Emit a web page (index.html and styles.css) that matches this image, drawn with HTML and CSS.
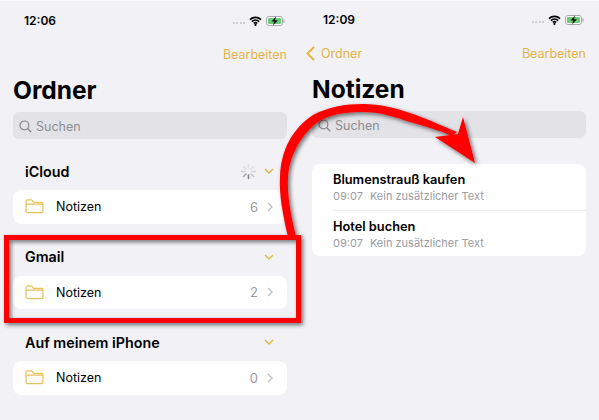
FILE: index.html
```html
<!DOCTYPE html>
<html>
    <head>
        <title>Notizen Ordner</title>
        <meta charset="UTF-8">
        <link rel="stylesheet" href="styles.css">
    </head>
    <body>
        <div class="shots">
            <div class="screen">
                <div class="status">
                    <span class="time">12:06</span>
                    <span class="status-icons">
                        <span class="dots"><i></i><i></i><i></i><i></i></span>
                        <svg class="wifi" width="13" height="10" viewBox="0 0 13 10"><path d="M1 3.600a8 8 0 0 1 11 0M2.900 5.600a5.200 5.200 0 0 1 7.200 0M4.800 7.400a2.500 2.500 0 0 1 3.400 0" fill="none" stroke="#000" stroke-width="1.700"/><circle cx="6.500" cy="8.900" r="1.100" fill="#000"/></svg>
                        <svg class="battery" width="19" height="10" viewBox="0 0 19 10"><rect x="0.500" y="0.500" width="16" height="9" rx="2.500" fill="#fff" stroke="#a9a9ad"/><rect x="2" y="2" width="13" height="6" rx="1" fill="#6ccb78"/><rect x="17.400" y="3.400" width="1.200" height="3.200" fill="#a9a9ad"/><path d="M10 0.500 5.500 5.600h2.800L7 9.500 12 4.300H9z" fill="#111"/></svg>
                    </span>
                </div>
                <div class="nav">
                    <span class="nav-link">Bearbeiten</span>
                </div>
                <h1>Ordner</h1>
                <div class="search">
                    <svg width="13" height="13" viewBox="0 0 13 13"><circle cx="5.400" cy="5.400" r="4.400" fill="none" stroke="#8b8b90" stroke-width="1.200"/><path d="M8.600 8.600 12.200 12.200" stroke="#8b8b90" stroke-width="1.400"/></svg>
                    <span>Suchen</span>
                </div>

                <div class="group-head">
                    <span class="group-name">iCloud</span>
                    <svg class="spinner" width="17" height="17" viewBox="0 0 17 17">
                        <g stroke-width="1.600" stroke-linecap="round">
                            <path d="M8.500 1.500V5" stroke="#e2e2e4"/>
                            <path d="M13.500 3.500 11 6" stroke="#dcdcdf"/>
                            <path d="M15.500 8.500H12" stroke="#d6d6d9"/>
                            <path d="M13.500 13.500 11 11" stroke="#c6c6ca"/>
                            <path d="M8.500 15.500V12" stroke="#86868b"/>
                            <path d="M3.500 13.500 6 11" stroke="#a6a6aa"/>
                            <path d="M1.500 8.500H5" stroke="#d0d0d3"/>
                            <path d="M3.500 3.500 6 6" stroke="#dcdcdf"/>
                        </g>
                    </svg>
                    <svg class="chev-down" width="10" height="6" viewBox="0 0 10 6"><path d="M1 1 5 5 9 1" fill="none" stroke="#e3b440" stroke-width="1.400"/></svg>
                </div>
                <div class="folder-row">
                    <svg class="folder" width="19" height="15" viewBox="0 0 20 16"><path d="M1 13V2.500A1.500 1.500 0 0 1 2.500 1H7l2 2.500h8.500A1.500 1.500 0 0 1 19 5v8a1.500 1.500 0 0 1-1.500 1.500h-15A1.500 1.500 0 0 1 1 13zM1 5.500h18" fill="#fffefa" stroke="#e6c25f" stroke-width="1.300"/></svg>
                    <span class="folder-name">Notizen</span>
                    <span class="count">6</span>
                    <svg class="chev-right" width="6" height="10" viewBox="0 0 6 10"><path d="M1 1 5 5 1 9" fill="none" stroke="#c0c0c4" stroke-width="1.300"/></svg>
                </div>

                <div class="group-head">
                    <span class="group-name">Gmail</span>
                    <svg class="chev-down" width="10" height="6" viewBox="0 0 10 6"><path d="M1 1 5 5 9 1" fill="none" stroke="#e3b440" stroke-width="1.400"/></svg>
                </div>
                <div class="folder-row">
                    <svg class="folder" width="19" height="15" viewBox="0 0 20 16"><path d="M1 13V2.500A1.500 1.500 0 0 1 2.500 1H7l2 2.500h8.500A1.500 1.500 0 0 1 19 5v8a1.500 1.500 0 0 1-1.500 1.500h-15A1.500 1.500 0 0 1 1 13zM1 5.500h18" fill="#fffefa" stroke="#e6c25f" stroke-width="1.300"/></svg>
                    <span class="folder-name">Notizen</span>
                    <span class="count">2</span>
                    <svg class="chev-right" width="6" height="10" viewBox="0 0 6 10"><path d="M1 1 5 5 1 9" fill="none" stroke="#c0c0c4" stroke-width="1.300"/></svg>
                </div>

                <div class="group-head">
                    <span class="group-name">Auf meinem iPhone</span>
                    <svg class="chev-down" width="10" height="6" viewBox="0 0 10 6"><path d="M1 1 5 5 9 1" fill="none" stroke="#e3b440" stroke-width="1.400"/></svg>
                </div>
                <div class="folder-row">
                    <svg class="folder" width="19" height="15" viewBox="0 0 20 16"><path d="M1 13V2.500A1.500 1.500 0 0 1 2.500 1H7l2 2.500h8.500A1.500 1.500 0 0 1 19 5v8a1.500 1.500 0 0 1-1.500 1.500h-15A1.500 1.500 0 0 1 1 13zM1 5.500h18" fill="#fffefa" stroke="#e6c25f" stroke-width="1.300"/></svg>
                    <span class="folder-name">Notizen</span>
                    <span class="count">0</span>
                    <svg class="chev-right" width="6" height="10" viewBox="0 0 6 10"><path d="M1 1 5 5 1 9" fill="none" stroke="#c0c0c4" stroke-width="1.300"/></svg>
                </div>
            </div>

            <div class="screen second">
                <div class="status">
                    <span class="time">12:09</span>
                    <span class="status-icons">
                        <span class="dots"><i></i><i></i><i></i><i></i></span>
                        <svg class="wifi" width="13" height="10" viewBox="0 0 13 10"><path d="M1 3.600a8 8 0 0 1 11 0M2.900 5.600a5.200 5.200 0 0 1 7.200 0M4.800 7.400a2.500 2.500 0 0 1 3.400 0" fill="none" stroke="#000" stroke-width="1.700"/><circle cx="6.500" cy="8.900" r="1.100" fill="#000"/></svg>
                        <svg class="battery" width="19" height="10" viewBox="0 0 19 10"><rect x="0.500" y="0.500" width="16" height="9" rx="2.500" fill="#fff" stroke="#a9a9ad"/><rect x="2" y="2" width="13" height="6" rx="1" fill="#6ccb78"/><rect x="17.400" y="3.400" width="1.200" height="3.200" fill="#a9a9ad"/><path d="M10 0.500 5.500 5.600h2.800L7 9.500 12 4.300H9z" fill="#111"/></svg>
                    </span>
                </div>
                <div class="nav">
                    <span class="back">
                        <svg width="9" height="15" viewBox="0 0 9 15"><path d="M8 1 1.500 7.500 8 14" fill="none" stroke="#e3b440" stroke-width="1.800"/></svg>
                        <span class="nav-link">Ordner</span>
                    </span>
                    <span class="nav-link">Bearbeiten</span>
                </div>
                <h1>Notizen</h1>
                <div class="search">
                    <svg width="13" height="13" viewBox="0 0 13 13"><circle cx="5.400" cy="5.400" r="4.400" fill="none" stroke="#8b8b90" stroke-width="1.200"/><path d="M8.600 8.600 12.200 12.200" stroke="#8b8b90" stroke-width="1.400"/></svg>
                    <span>Suchen</span>
                </div>
                <div class="notes">
                    <div class="note">
                        <div class="note-title">Blumenstrauß kaufen</div>
                        <div class="note-meta"><span>09:07</span><span>Kein zusätzlicher Text</span></div>
                    </div>
                    <div class="note">
                        <div class="note-title">Hotel buchen</div>
                        <div class="note-meta"><span>09:07</span><span>Kein zusätzlicher Text</span></div>
                    </div>
                </div>
            </div>
        </div>

        <!-- red annotation drawn over both screenshots -->
        <svg class="annotation" width="599" height="420" viewBox="0 0 599 420">
            <defs>
                <filter id="drop" x="-10%" y="-10%" width="120%" height="120%">
                    <feDropShadow dx="2" dy="2" stdDeviation="2" flood-color="#000" flood-opacity="0.55"/>
                </filter>
            </defs>
            <g filter="url(#drop)">
                <rect x="6.500" y="237.500" width="292" height="83" fill="none" stroke="#f00" stroke-width="5"/>
                <path d="M288 237C283 215 279 196 280 177C281 150 292 129 313 115C328 107 345 104 363 104C380 104 396 108 410 113C428 119 442 126 457 132L452 136C438 130 424 126 410 122C395 117 380 112 363 112C346 112 333 114 321 120C304 131 290 152 288 177C287 197 291 215 296 237Z" fill="#f00"/>
                <path d="M475 163 463 117 458 134 435 137z" fill="#f00"/>
            </g>
        </svg>
    </body>
</html>
```

FILE: styles.css
```css
* {
    box-sizing: border-box;
    margin: 0;
    padding: 0;
}

body {
    width: 599px;
    height: 420px;
    overflow: hidden;
    background: #f1f1f6;
    font-family: 'Inter', 'Liberation Sans', sans-serif;
    color: #000;
    position: relative;
}

.shots {
    display: flex;
    height: 420px;
    border-top: 1px solid #fbfbfd;
}

.screen {
    width: 299px;
    padding: 0 12px 0 13px;
}

.second {
    width: 300px;
    padding: 0 13px 0 13px;
    margin-top: -1px;
}

.status {
    height: 38px;
    padding: 12px 2px 0 11px;
    display: flex;
    justify-content: space-between;
    align-items: flex-start;
}

.time {
    font-size: 12px;
    font-weight: 600;
    line-height: 16px;
}

.status-icons {
    display: flex;
    align-items: center;
    gap: 4px;
    height: 16px;
}

.dots {
    display: flex;
    gap: 1.500px;
    margin-top: 3px;
}

.dots i {
    width: 2px;
    height: 2px;
    border-radius: 50%;
    background: #c4c4c8;
}

.nav {
    height: 30px;
    display: flex;
    justify-content: flex-end;
    align-items: center;
}

.second .nav {
    justify-content: space-between;
}

.back {
    display: flex;
    align-items: center;
    gap: 6px;
    margin-left: -6px;
}

.nav-link {
    font-size: 12.500px;
    color: #e3b448;
}

h1 {
    font-size: 24.500px;
    font-weight: 700;
    line-height: 32px;
    height: 43px;
    padding-top: 5px;
}

.search {
    height: 27px;
    border-radius: 6px;
    background: #e2e2e7;
    display: flex;
    align-items: center;
    gap: 4px;
    padding: 1px 0 0 6px;
    font-size: 12.500px;
    color: #8e8e93;
}

.group-head {
    height: 32px;
    padding: 0 13px 0 12px;
    margin-top: 17px;
    margin-bottom: 3px;
    display: flex;
    align-items: center;
    justify-content: flex-end;
}

.search + .group-head {
    margin-top: 16px;
}

.group-name {
    font-size: 14.300px;
    font-weight: 600;
    margin-right: auto;
}

.spinner {
    margin-right: 7px;
}

.folder-row {
    height: 33.500px;
    border-radius: 8px;
    background: #fff;
    display: flex;
    align-items: center;
    padding: 0 14px 0 12px;
    font-size: 12.500px;
}

.folder-name {
    margin-left: 12px;
    margin-right: auto;
}

.count {
    color: #9a9a9e;
    font-size: 13px;
    margin-right: 9px;
}

.notes {
    margin-top: 26px;
    background: #fff;
    border-radius: 8px;
    padding-left: 21px;
}

.note {
    height: 46px;
    padding-top: 8px;
}

.note + .note {
    border-top: 1px solid #eeeef2;
}

.note-title {
    font-size: 12.800px;
    font-weight: 600;
    line-height: 16px;
}

.note-meta {
    display: flex;
    gap: 7px;
    font-size: 11px;
    line-height: 16px;
    color: #9c9ca1;
}

.annotation {
    position: absolute;
    left: 0;
    top: 0;
}
```
